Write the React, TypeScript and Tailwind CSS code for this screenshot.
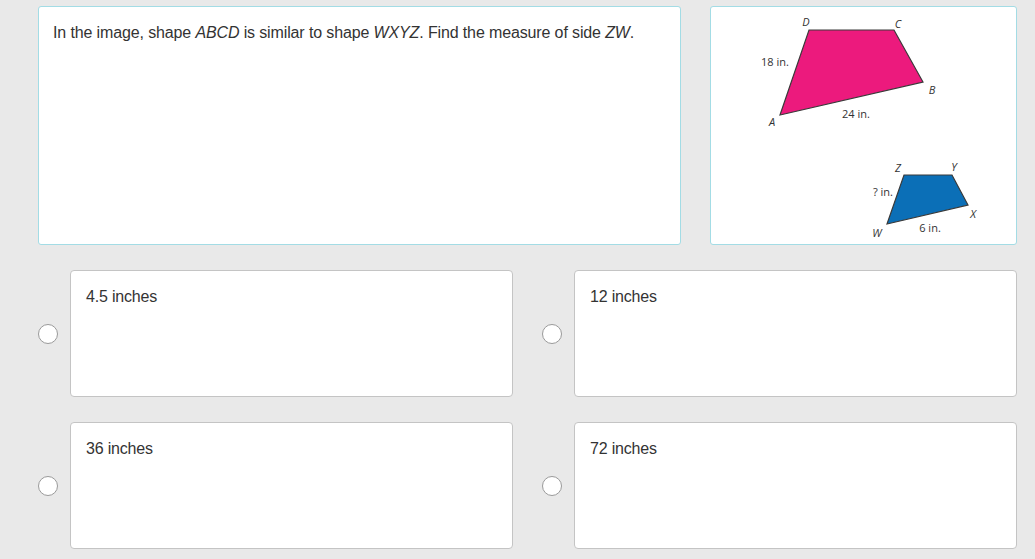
const answers = [
    ["4.5 inches", "12 inches"],
    ["36 inches", "72 inches"],
];

function Radio() {
    return <div className="w-[20px] h-[20px] rounded-full bg-white border border-[#9a9a9a] shrink-0" />;
}

function Diagram() {
    const lbl = "fill-[#333] text-[11px]";
    return (
        <svg width="307" height="239" viewBox="0 0 307 239" className="font-['Open_Sans',sans-serif]">
            <polygon points="98,23 183,23 212,75 69,108" fill="#ec1a7d" stroke="#3a3a3a" strokeWidth="1.2" />
            <polygon points="193,168 241,168 257,198 176,217" fill="#0b6fb7" stroke="#3a3a3a" strokeWidth="1.2" />
            <g textAnchor="middle" dominantBaseline="central">
                <text x="95" y="14" className={lbl} fontStyle="italic">D</text>
                <text x="187" y="16" className={lbl} fontStyle="italic">C</text>
                <text x="64" y="54" className={lbl}>18 in.</text>
                <text x="221" y="82" className={lbl} fontStyle="italic">B</text>
                <text x="61" y="114" className={lbl} fontStyle="italic">A</text>
                <text x="145" y="106" className={lbl}>24 in.</text>
                <text x="187" y="160" className={lbl} fontStyle="italic">Z</text>
                <text x="243" y="159" className={lbl} fontStyle="italic">Y</text>
                <text x="172" y="184" className={lbl}>? in.</text>
                <text x="262" y="206" className={lbl} fontStyle="italic">X</text>
                <text x="219" y="220" className={lbl}>6 in.</text>
                <text x="166" y="225" className={lbl} fontStyle="italic">W</text>
            </g>
        </svg>
    );
}

export default function App() {
    return (
        <div className="w-[1035px] min-h-[559px] bg-[#e9e9e9] pt-[6px] pl-[38px] font-['Liberation_Sans',Arial,sans-serif] text-[#333]">
            <div className="flex gap-[29px]">
                <div className="w-[643px] h-[239px] bg-white border border-[#a3dce5] rounded-[3px] px-[14px] pt-[17px]">
                    <p className="text-[16px] leading-[18px] tracking-[-0.13px]">
                        In the image, shape <i>ABCD</i> is similar to shape <i>WXYZ</i>. Find the measure of side <i>ZW</i>.
                    </p>
                </div>
                <div className="w-[307px] h-[239px] bg-white border border-[#a3dce5] rounded-[3px] overflow-hidden">
                    <Diagram />
                </div>
            </div>

            <div className="flex flex-col gap-[25px] mt-[25px]">
                {answers.map((row, i) => (
                    <div key={i} className="flex">
                        {row.map((a, j) => (
                            <div key={j} className={`flex items-center gap-[12px] ${j === 1 ? "ml-[29px]" : ""}`}>
                                <Radio />
                                <div className="w-[443px] h-[127px] bg-white border border-[#c4c4c4] rounded-[4px] pl-[15px] pt-[14px]">
                                    <span className="text-[16px] leading-[18px] tracking-[-0.2px]">{a}</span>
                                </div>
                            </div>
                        ))}
                    </div>
                ))}
            </div>
        </div>
    );
}
